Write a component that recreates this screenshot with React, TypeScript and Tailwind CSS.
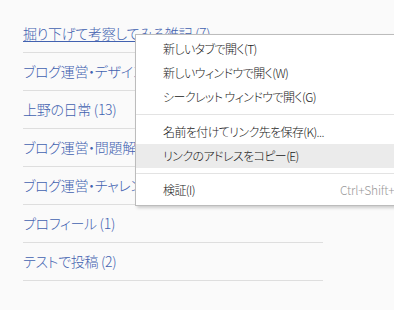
import React from "react";

const items = [
  "掘り下げて考察してみる雑記 (7)",
  "ブログ運営・デザイン (9)",
  "上野の日常 (13)",
  "ブログ運営・問題解決 (6)",
  "ブログ運営・チャレンジ (4)",
  "プロフィール (1)",
  "テストで投稿 (2)",
];

function MenuRow({ label, shortcut, active }: { label: string; shortcut?: string; active?: boolean }) {
  return (
    <div className={`flex h-[24px] items-center pl-[27px] ${active ? "bg-[#ebebeb]" : ""}`}>
      <span className="w-[177px] shrink-0 whitespace-nowrap tracking-[-0.6px]">{label}</span>
      {shortcut && <span className="whitespace-nowrap text-[#9a9a9a] tracking-[-0.2px]">{shortcut}</span>}
    </div>
  );
}

function Sep({ h }: { h: string }) {
  return (
    <div className={`flex ${h} items-center`}>
      <div className="h-px w-full bg-[#e3e3e3]" />
    </div>
  );
}

export default function App() {
  return (
    <div
      className="relative h-[310px] w-[394px] overflow-hidden bg-[#fafafa] font-light [font-feature-settings:'palt']"
      style={{ fontFamily: '"Noto Sans CJK JP", "Noto Sans", sans-serif' }}
    >
      <ul className="ml-[23px] w-[300px] pt-[15px]">
        {items.map((t, i) => (
          <li
            key={t}
            className="flex h-[38px] items-center border-b border-[#dedede] text-[14px] tracking-[-0.3px] text-[#4262b0]"
          >
            <span className={i === 0 ? "underline underline-offset-2" : ""}>{t}</span>
          </li>
        ))}
      </ul>

      <div className="absolute left-[135px] top-[34px] w-[300px] border border-[#bcbcbc] bg-white pb-[3px] pt-[2px] text-[12px] text-[#202020] shadow-[2px_2px_3px_rgba(0,0,0,0.18)]">
        <MenuRow label="新しいタブで開く(T)" />
        <MenuRow label="新しいウィンドウで開く(W)" />
        <MenuRow label="シークレット ウィンドウで開く(G)" />
        <Sep h="h-[11px]" />
        <MenuRow label="名前を付けてリンク先を保存(K)..." />
        <MenuRow label="リンクのアドレスをコピー(E)" active />
        <Sep h="h-[10px]" />
        <MenuRow label="検証(I)" shortcut="Ctrl+Shift+I" />
      </div>
    </div>
  );
}
